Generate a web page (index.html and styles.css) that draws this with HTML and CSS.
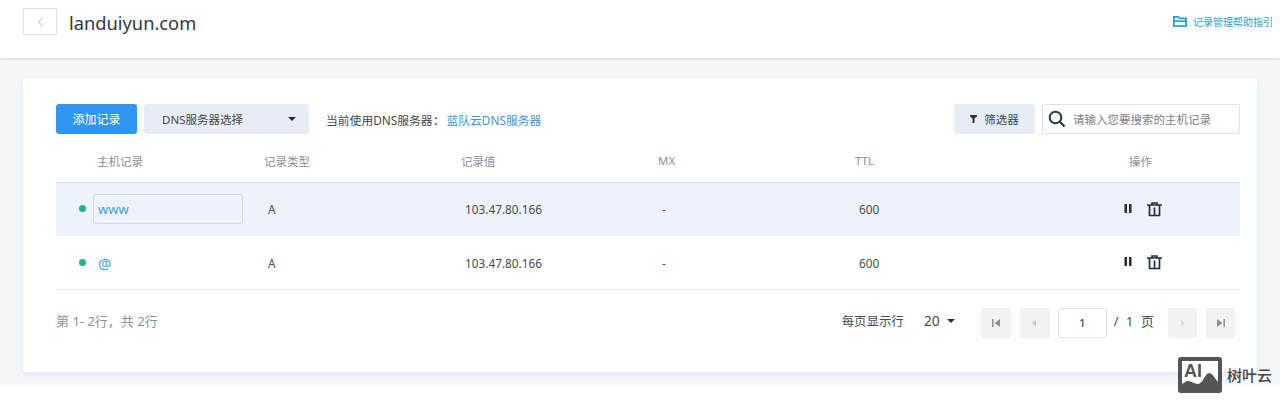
FILE: index.html
```html
<!DOCTYPE html>
<html lang="zh-CN">
<head>
<meta charset="utf-8">
<title>landuiyun.com</title>
<link rel="stylesheet" href="styles.css">
</head>
<body>
<header class="topbar">
  <div class="topbar-left">
    <button class="back" type="button" aria-label="返回">
      <svg width="9" height="14" viewBox="0 0 9 14"><path d="M7 2.500 2.500 7 7 11.500" fill="none" stroke="#b4b8bd" stroke-width="1"/></svg>
    </button>
    <h1 class="domain">landuiyun.com</h1>
  </div>
  <a class="help">
    <svg width="14" height="11" viewBox="0 0 14 11"><path d="M.9.9h4.400l1 1.400h6.800v7.800H.9z" fill="none" stroke="#2a9fd8" stroke-width="1.800"/><path d="M1 4.300h12v1.700H1z" fill="#2a9fd8"/></svg>
    <span>记录管理帮助指引</span>
  </a>
</header>
<main class="page">
  <section class="card">
    <div class="toolbar">
      <button class="btn-primary" type="button">添加记录</button>
      <div class="select"><span>DNS服务器选择</span><i class="caret"></i></div>
      <p class="current">当前使用DNS服务器：<a>蓝队云DNS服务器</a></p>
      <div class="toolbar-right">
        <button class="btn-filter" type="button">
          <svg width="7" height="8" viewBox="0 0 7 8"><path d="M0 0h7v1.600L4.500 3.500V8h-2V3.500L0 1.600z" fill="#2c3442"/></svg>
          <span>筛选器</span>
        </button>
        <div class="search">
          <svg width="18" height="18" viewBox="0 0 18 18"><circle cx="7.500" cy="7.500" r="5.800" fill="none" stroke="#2c3442" stroke-width="2"/><path d="m11.800 11.800 4.700 4.700" stroke="#2c3442" stroke-width="2.200"/></svg>
          <span>请输入您要搜索的主机记录</span>
        </div>
      </div>
    </div>

    <div class="thead">
      <div class="th th-host">主机记录</div>
      <div class="th">记录类型</div>
      <div class="th">记录值</div>
      <div class="th">MX</div>
      <div class="th">TTL</div>
      <div class="th th-op">操作</div>
    </div>

    <div class="row row-active">
      <div class="host"><i class="dot"></i><span class="host-input">www</span></div>
      <div class="td">A</div>
      <div class="td">103.47.80.166</div>
      <div class="td">-</div>
      <div class="td">600</div>
      <div class="ops">
        <svg width="8" height="9" viewBox="0 0 8 9"><path d="M.5 0h2.500v9H.5zM5 0h2.500v9H5z" fill="#262e3c"/></svg>
        <svg width="15" height="15" viewBox="0 0 15 15"><path d="M0 3h15M5 3V1h5v2M2.500 3v10.500h10V3M7.500 5.500v8" fill="none" stroke="#262e3c" stroke-width="1.700"/></svg>
      </div>
    </div>
    <div class="row">
      <div class="host"><i class="dot"></i><span class="host-text">@</span></div>
      <div class="td">A</div>
      <div class="td">103.47.80.166</div>
      <div class="td">-</div>
      <div class="td">600</div>
      <div class="ops">
        <svg width="8" height="9" viewBox="0 0 8 9"><path d="M.5 0h2.500v9H.5zM5 0h2.500v9H5z" fill="#262e3c"/></svg>
        <svg width="15" height="15" viewBox="0 0 15 15"><path d="M0 3h15M5 3V1h5v2M2.500 3v10.500h10V3M7.500 5.500v8" fill="none" stroke="#262e3c" stroke-width="1.700"/></svg>
      </div>
    </div>

    <div class="pager">
      <span class="total">第 1- 2行，共 2行</span>
      <div class="pager-right">
        <span class="per">每页显示行</span>
        <span class="size">20<i class="caret"></i></span>
        <span class="nav nav-first"><svg width="10" height="10" viewBox="0 0 10 10"><path d="M1 1h1.500v8H1zM9 1v8L3.500 5z" fill="#8b9097"/></svg></span>
        <span class="nav nav-prev"><svg width="5" height="6" viewBox="0 0 5 6"><path d="M4 0v6L0 3z" fill="#c3c6ca"/></svg></span>
        <span class="page-input">1</span>
        <span class="page-of">/&nbsp;&nbsp;1&nbsp;&nbsp;页</span>
        <span class="nav nav-next"><svg width="5" height="6" viewBox="0 0 5 6"><path d="M1 0v6l4-3z" fill="#d3d5d8"/></svg></span>
        <span class="nav nav-last"><svg width="10" height="10" viewBox="0 0 10 10"><path d="M9 1H7.500v8H9zM1 1v8l5.500-4z" fill="#8b9097"/></svg></span>
      </div>
    </div>
  </section>
</main>
<div class="watermark">
  <span class="wm-logo">
    <svg width="44" height="36" viewBox="0 0 44 36"><rect width="44" height="36" rx="3" fill="#555"/><path d="M4 4h36v21c-3-4-6-9-9-9-4 0-6 11-11 11-4 0-6-3-10-3-2 0-4 2-6 3z" fill="#fff"/><text x="6" y="20" class="wm-ai">AI</text></svg>
  </span>
  <span class="wm-text">树叶云</span>
</div>
</body>
</html>
```

FILE: styles.css
```css
* { box-sizing: border-box; }
html, body { margin: 0; padding: 0; }
body {
  position: relative;
  height: 404px;
  overflow: hidden;
  background: #fff;
  font-family: "Noto Sans", "Noto Sans CJK SC", "Liberation Sans", sans-serif;
  color: #444b55;
}
button { font-family: inherit; border: 0; padding: 0; }
i { display: block; }

.topbar {
  height: 58px;
  background: #fff;
  display: flex;
  justify-content: space-between;
  padding: 8px 7px 0 23px;
  box-shadow: 0 1px 3px rgba(120, 135, 150, .28);
  position: relative;
}
.topbar-left { display: flex; align-items: flex-start; gap: 12px; }
.back {
  width: 34px;
  height: 27px;
  background: #fff;
  border: 1px solid #dfe1e4;
  display: flex;
  align-items: center;
  justify-content: center;
}
.domain {
  margin: 0;
  font-size: 18.300px;
  line-height: 29px;
  font-weight: 400;
  color: #33383f;
}
.help {
  display: flex;
  align-items: center;
  gap: 6px;
  height: 27px;
  font-size: 10px;
  color: #2a9fd8;
}

.page {
  height: 327px;
  background: #f5f8fb;
  padding: 20px 23px 0;
}
.card {
  height: 294px;
  background: #fff;
  border-radius: 3px;
  box-shadow: 0 2px 5px rgba(120, 135, 150, .18);
  padding: 26px 17px 0 33px;
}

.toolbar { display: flex; align-items: center; height: 30px; }
.btn-primary {
  width: 81px;
  height: 30px;
  border-radius: 3px;
  background: #2f96f3;
  color: #fff;
  font-size: 12px;
}
.select {
  width: 165px;
  height: 30px;
  margin-left: 7px;
  padding: 0 13px 0 18px;
  border-radius: 3px;
  background: #e8edf5;
  display: flex;
  align-items: center;
  justify-content: space-between;
  font-size: 11.500px;
  color: #3f4650;
}
.caret {
  width: 0;
  height: 0;
  border-left: 4px solid transparent;
  border-right: 4px solid transparent;
  border-top: 4px solid #262e3c;
}
.current { margin: 0 0 0 17px; font-size: 11.800px; color: #3f4650; }
.current a { color: #3d94e0; margin-left: 2px; }
.toolbar-right { margin-left: auto; display: flex; gap: 7px; }
.btn-filter {
  width: 81px;
  height: 30px;
  border-radius: 3px;
  background: #e8edf5;
  display: flex;
  align-items: center;
  justify-content: center;
  gap: 7px;
  font-size: 11.500px;
  color: #3f4650;
}
.search {
  width: 198px;
  height: 30px;
  border: 1px solid #dfe2e6;
  border-radius: 2px;
  display: flex;
  align-items: center;
  gap: 7px;
  padding-left: 5px;
  font-size: 11.500px;
  color: #7b8087;
}

.thead, .row {
  display: grid;
  grid-template-columns: 204px repeat(4, 197px) 1fr;
  align-items: center;
}
.thead {
  height: 49px;
  border-bottom: 1px solid #dde3ea;
  font-size: 11.500px;
  color: #8b9097;
  padding-top: 5px;
}
.th { padding-left: 4px; }
.th-host { padding-left: 41px; }
.th-op { padding-left: 81px; }

.row {
  height: 54px;
  font-size: 11.800px;
  color: #464c55;
  border-bottom: 1px solid #e9ecef;
}
.row-active { height: 53px; padding-bottom: 2px; background: #eef2fb; border-bottom: 0; }
.td { padding-left: 8px; }
.host { display: flex; align-items: center; padding-left: 23px; }
.dot {
  width: 7px;
  height: 7px;
  border-radius: 50%;
  background: #1fb57f;
  margin-right: 7px;
  flex: none;
}
.host-input {
  width: 150px;
  height: 30px;
  padding-left: 4px;
  border: 1px solid #cfd5e6;
  border-radius: 3px;
  font-size: 13px;
  line-height: 28px;
  color: #3f9edb;
}
.host-text { padding-left: 5px; font-size: 15px; color: #3f9edb; }
.ops { display: flex; align-items: flex-start; gap: 15px; padding-left: 76px; }
.row-active .ops { margin-top: 2px; }
.ops svg { display: block; }
.ops svg:first-child { margin-top: 2px; }

.pager {
  display: flex;
  align-items: center;
  justify-content: space-between;
  height: 65px;
  padding-right: 5px;
}
.total { font-size: 13px; color: #8b9097; margin-bottom: 4px; }
.pager-right { display: flex; align-items: center; font-size: 12.400px; color: #464c55; }
.per { margin-right: 20px; margin-bottom: 4px; }
.size { display: flex; align-items: center; gap: 7px; font-size: 14px; margin-right: 26px; margin-bottom: 4px; }
.nav {
  width: 30px;
  height: 30px;
  border-radius: 2px;
  background: #f2f2f3;
  display: flex;
  align-items: center;
  justify-content: center;
}
.nav svg { display: block; }
.nav-first { margin-right: 9px; }
.nav-prev { margin-right: 8px; }
.page-input {
  width: 49px;
  height: 30px;
  border: 1px solid #dfe1e4;
  border-radius: 3px;
  display: flex;
  align-items: center;
  justify-content: center;
  font-size: 11.500px;
  font-weight: 500;
}
.page-of { margin: 0 14px 4px 7px; font-size: 12.800px; letter-spacing: .3px; }
.nav-next, .nav-last { width: 29px; }
.nav-next { margin-right: 9px; }

.watermark {
  position: absolute;
  left: 1178px;
  top: 357px;
  display: flex;
  align-items: center;
  gap: 5px;
}
.wm-logo { display: block; height: 36px; }
.wm-logo svg { display: block; }
.wm-ai { font-family: "Liberation Sans", sans-serif; font-size: 18px; font-weight: 700; fill: #555; }
.wm-text { font-size: 15px; font-weight: 500; color: #444; margin-bottom: 2px; }
```
